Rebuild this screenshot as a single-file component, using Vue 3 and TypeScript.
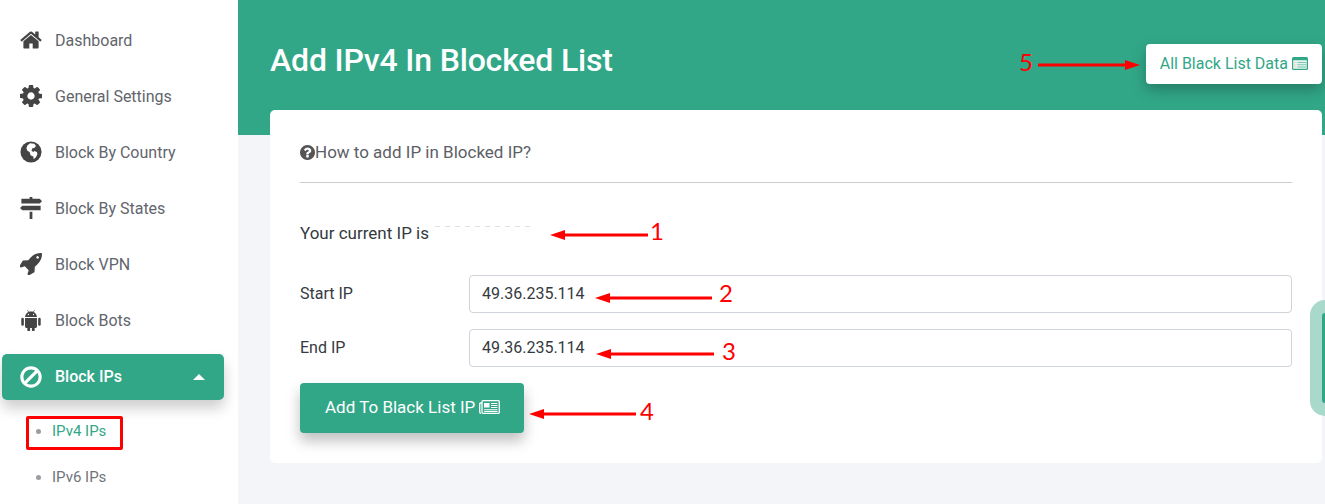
<script setup lang="ts">
interface NavItem { label: string; icon: string }
const nav: NavItem[] = [
  { label: 'Dashboard', icon: 'home' },
  { label: 'General Settings', icon: 'cog' },
  { label: 'Block By Country', icon: 'globe' },
  { label: 'Block By States', icon: 'signs' },
  { label: 'Block VPN', icon: 'rocket' },
  { label: 'Block Bots', icon: 'android' },
]
const home = 'M1472 992v480q0 26-19 45t-45 19h-384v-384h-256v384h-384q-26 0-45-19t-19-45v-480q0-1 .5-3t.5-3l575-474 575 474q1 2 1 6zm223-69l-62 74q-8 9-21 11h-3q-13 0-21-7l-692-577-692 577q-12 8-24 7-13-2-21-11l-62-74q-8-10-7-23.500t11-21.500l719-599q32-26 76-26t76 26l244 204v-195q0-14 9-23t23-9h192q14 0 23 9t9 23v408l219 182q10 8 11 21.500t-7 23.500z'
const cog = 'M1152 896q0-106-75-181t-181-75-181 75-75 181 75 181 181 75 181-75 75-181zm512-109v222q0 12-8 23t-20 13l-185 28q-19 54-39 91 35 50 107 138 10 12 10 25t-9 23q-27 37-99 108t-94 71q-12 0-26-9l-138-108q-44 23-91 38-16 136-29 186-7 28-36 28h-222q-14 0-24.500-8.500t-11.500-21.500l-28-184q-49-16-90-37l-141 107q-10 9-25 9-14 0-25-11-126-114-165-168-7-10-7-23 0-12 8-23 15-21 51-66.500t54-70.500q-27-50-41-99l-183-27q-13-2-21-12.500t-8-23.500v-222q0-12 8-23t19-13l186-28q14-46 39-92-40-57-107-138-10-12-10-24 0-10 9-23 26-36 98.500-107.500t94.500-71.500q13 0 26 10l138 107q44-23 91-38 16-136 29-186 7-28 36-28h222q14 0 24.500 8.500t11.500 21.500l28 184q49 16 90 37l142-107q9-9 24-9 13 0 25 10 129 119 165 170 7 8 7 22 0 12-8 23-15 21-51 66.500t-54 70.500q26 50 41 98l183 28q13 2 21 12.500t8 23.500z'
const rocket = 'M1504 448q0-40-28-68t-68-28-68 28-28 68 28 68 68 28 68-28 28-68zm224-288q0 249-75.500 430.500t-253.500 360.500q-81 80-195 176l-20 379q-2 16-16 26l-384 224q-7 4-16 4-12 0-23-9l-64-64q-13-14-8-32l85-276-281-281-276 85q-3 1-9 1-14 0-23-9l-64-64q-17-19-5-39l224-384q10-14 26-16l379-20q96-114 176-195 188-187 358-258t431-71q14 0 24 9.500t10 22.500z'
const question = 'M1024 1376v-192q0-14-9-23t-23-9h-192q-14 0-23 9t-9 23v192q0 14 9 23t23 9h192q14 0 23-9t9-23zm256-672q0-88-55.500-163t-138.500-116-170-41q-243 0-371 213-15 24 8 42l132 100q7 6 19 6 16 0 25-12 53-68 86-92 34-24 86-24 48 0 85.500 26t37.500 59q0 38-20 61t-68 45q-63 28-115.500 86.500t-52.500 125.500v36q0 14 9 23t23 9h192q14 0 23-9t9-23q0-19 21.500-49.500t54.500-49.500q32-18 49-28.500t46-35 44.500-48 28-60.500 12.500-81zm384 192q0 209-103 385.500t-279.500 279.500-385.500 103-385.500-103-279.500-279.500-103-385.500 103-385.500 279.500-279.500 385.500-103 385.500 103 279.500 279.500 103 385.500z'

interface Arrow { x1: number; tip: number; y: number; n: string; nx: number; ny: number }
const arrows: Arrow[] = [
  { x1: 648, tip: 550, y: 235, n: '1', nx: 657, ny: 240 },
  { x1: 712, tip: 595, y: 298, n: '2', nx: 726, ny: 302 },
  { x1: 714, tip: 596, y: 354, n: '3', nx: 729, ny: 360 },
  { x1: 636, tip: 529, y: 414, n: '4', nx: 647, ny: 420 },
  { x1: 1038, tip: 1140, y: 65, n: '5', nx: 1026, ny: 71 },
]
function headPoints(a: Arrow): string {
  const dir = a.x1 > a.tip ? 1 : -1
  const base = a.tip + dir * 15
  return `${a.tip},${a.y} ${base},${a.y - 5} ${base},${a.y + 5}`
}
</script>

<template>
  <div class="page">
    <aside class="sidebar">
      <ul class="menu">
        <li v-for="item in nav" :key="item.label" class="menu-item">
          <svg v-if="item.icon === 'home'" class="ico" viewBox="64 192 1664 1408"><path :d="home" /></svg>
          <svg v-else-if="item.icon === 'cog'" class="ico" viewBox="128 128 1536 1536"><path :d="cog" /></svg>
          <svg v-else-if="item.icon === 'globe'" class="ico" viewBox="0 0 24 24">
            <circle cx="12" cy="12" r="11.500" />
            <path fill="#fff" d="M8 5l3-2.500 4.500.5 2 2.500-2 2-2 .5-1 2.500 2 1.500 1-1 3 1 .5 2.500-1.500 3-2.500 2.500-.5-3-3-1.500-1-3.500-2.500-1.500-1-2.500z" />
          </svg>
          <svg v-else-if="item.icon === 'signs'" class="ico tall" viewBox="0 0 24 24">
            <path d="M10.500 0h3v2h8l2.500 2.500-2.500 2.500H1.500V2h9zM2.500 9.500H22.500v5h-20L0 12zM10.500 16h3v8h-3z" />
          </svg>
          <svg v-else-if="item.icon === 'rocket'" class="ico" viewBox="128 128 1600 1600"><path :d="rocket" /></svg>
          <svg v-else class="ico" viewBox="0 0 24 24">
            <path d="M5.500 8.800C5.700 5.900 7.500 4.200 9 3.400L7.900 1.400l.5-.3L9.600 3.100C11.100 2.500 12.900 2.500 14.400 3.100L15.600 1.100l.5.3L15 3.400C16.500 4.200 18.300 5.900 18.500 8.800zM5.500 9.800h13v9.400c0 .8-.6 1.400-1.400 1.400H16v2.200a1.500 1.500 0 0 1-3 0v-2.200h-2v2.200a1.500 1.500 0 0 1-3 0v-2.200H6.900c-.8 0-1.400-.6-1.400-1.400zM2.800 9.500A1.400 1.400 0 0 1 4.200 10.900v5.900a1.400 1.400 0 0 1-2.800 0v-5.900A1.400 1.400 0 0 1 2.800 9.500zM21.200 9.500a1.400 1.400 0 0 1 1.400 1.400v5.900a1.400 1.400 0 0 1-2.800 0v-5.900A1.400 1.400 0 0 1 21.200 9.500z" />
            <circle cx="9.200" cy="6" r=".7" fill="#fff" /><circle cx="14.800" cy="6" r=".7" fill="#fff" />
          </svg>
          <span>{{ item.label }}</span>
        </li>
        <li class="menu-item active">
          <svg class="ico" viewBox="0 0 24 24">
            <circle cx="12" cy="12" r="10" fill="none" stroke="#fff" stroke-width="3.400" />
            <path d="M5 19L19 5" stroke="#fff" stroke-width="3.400" />
          </svg>
          <span>Block IPs</span>
          <i class="caret"></i>
        </li>
        <li class="sub-item current"><i class="dot"></i>IPv4 IPs<b class="redbox"></b></li>
        <li class="sub-item"><i class="dot"></i>IPv6 IPs</li>
      </ul>
    </aside>

    <main class="main">
      <header class="banner">
        <h1>Add IPv4 In Blocked List</h1>
        <a class="list-btn">All Black List Data
          <svg class="list-ico" viewBox="0 0 16 13">
            <rect width="16" height="13" rx="1.500" fill="#31a788" />
            <rect x="1.200" y="3.200" width="13.600" height="8.600" fill="#e6f4f0" />
            <path d="M1.500 5.500h3M1.500 7.800h3M1.500 10h3" stroke="#f0d8c4" stroke-width="1.200" />
            <path d="M5.500 5.500h9M5.500 7.800h9M5.500 10h9" stroke="#7cc6b2" stroke-width="1.100" />
          </svg>
        </a>
      </header>

      <section class="card">
        <div class="help">
          <svg class="help-ico" viewBox="128 128 1536 1536"><path :d="question" /></svg>How to add IP in Blocked IP?
        </div>
        <hr class="rule" />
        <p class="current-ip">Your current IP is <span class="blur"></span></p>
        <div class="row">
          <label>Start IP</label>
          <div class="field">49.36.235.114</div>
        </div>
        <div class="row">
          <label>End IP</label>
          <div class="field">49.36.235.114</div>
        </div>
        <button class="add-btn" type="button">Add To Black List IP
          <svg class="news-ico" viewBox="0 0 21 14" fill="none" stroke="#fff">
            <rect x="3" y=".7" width="17.300" height="12.600" rx="1" stroke-width="1.300" />
            <path d="M3 3H1.700C1 3 .7 3.400 .7 4v8c0 .8.6 1.300 1.300 1.300" stroke-width="1.300" />
            <rect x="5" y="3" width="5.500" height="4.500" fill="#fff" stroke="none" />
            <path d="M12 3.500h6.500M12 5.500h6.500M12 7.500h6.500M5 9.700h13.500M5 11.500h13.500" stroke-width="1.100" />
          </svg>
        </button>
      </section>
    </main>

    <div class="side-tab"><i></i></div>

    <svg class="notes" viewBox="0 0 1325 504">
      <g v-for="a in arrows" :key="a.n">
        <line :x1="a.x1" :x2="a.tip + (a.x1 > a.tip ? 8 : -8)" :y1="a.y" :y2="a.y" stroke="#f00" stroke-width="3" />
        <polygon :points="headPoints(a)" fill="#f00" />
        <text :x="a.nx" :y="a.ny" text-anchor="middle" class="note-num">{{ a.n }}</text>
      </g>
    </svg>
  </div>
</template>

<style scoped>
.page {
  position: relative;
  display: flex;
  width: 1325px;
  height: 504px;
  overflow: hidden;
  background: #f4f5f8;
  font-family: Roboto, "Liberation Sans", sans-serif;
}
.sidebar {
  flex: 0 0 238px;
  background: #fff;
}
.menu {
  list-style: none;
  margin: 0;
  padding: 12px 14px 0 2px;
}
.menu-item {
  display: flex;
  align-items: center;
  height: 56px;
  padding-left: 18px;
  font-size: 16px;
  color: #62656c;
}
.ico {
  flex: 0 0 22px;
  width: 22px;
  height: 22px;
  margin-right: 13px;
  fill: #444;
}
.ico.tall {
  height: 24px;
}
.menu-item.active {
  position: relative;
  box-sizing: border-box;
  height: 46px;
  margin-top: 6px;
  padding-bottom: 1px;
  color: #fff;
  font-weight: 500;
  background: #31a788;
  border-radius: 5px;
  box-shadow: 0 8px 14px rgba(0, 0, 0, 0.2);
}
.caret {
  margin-left: auto;
  margin-right: 19px;
  border-left: 6px solid transparent;
  border-right: 6px solid transparent;
  border-bottom: 6px solid #fff;
}
.sub-item {
  position: relative;
  display: flex;
  align-items: center;
  height: 46px;
  padding-left: 34px;
  font-size: 15px;
  color: #70747a;
}
.sub-item.current {
  margin-top: 8px;
  color: #31a788;
}
.dot {
  width: 5px;
  height: 5px;
  margin-right: 11px;
  border-radius: 50%;
  background: #9a9da3;
}
.redbox {
  position: absolute;
  left: 24px;
  top: 8px;
  width: 97px;
  height: 34px;
  box-sizing: border-box;
  border: 3px solid #f00;
  border-radius: 2px;
}
.main {
  flex: 1;
  min-width: 0;
}
.banner {
  display: flex;
  justify-content: space-between;
  align-items: flex-start;
  box-sizing: border-box;
  height: 135px;
  padding: 44px 3px 0 32px;
  background: #31a788;
}
.banner h1 {
  margin: -4px 0 0;
  font-size: 32px;
  line-height: 40px;
  font-weight: 500;
  letter-spacing: -0.18px;
  color: #fff;
}
.list-btn {
  display: flex;
  align-items: center;
  gap: 4px;
  box-sizing: border-box;
  height: 40px;
  padding: 0 14px 2px;
  font-size: 16px;
  color: #31a788;
  background: #fff;
  border-radius: 4px;
  box-shadow: 0 6px 14px rgba(0, 0, 0, 0.25);
}
.list-ico {
  width: 16px;
  height: 13px;
}
.card {
  box-sizing: border-box;
  height: 353px;
  margin: -25px 3px 0 32px;
  padding: 30px 30px 0;
  background: #fff;
  border-radius: 5px;
}
.help {
  display: flex;
  align-items: center;
  height: 24px;
  font-size: 17px;
  color: #5c6066;
}
.help-ico {
  width: 15px;
  height: 15px;
  fill: #555;
}
.rule {
  margin: 18px 0 0;
  border: 0;
  border-top: 1px solid #ccc;
}
.current-ip {
  display: flex;
  gap: 6px;
  margin: 38px 0 0;
  font-size: 17px;
  line-height: 24px;
  color: #343a40;
}
.blur {
  width: 97px;
  height: 1px;
  margin-top: 5px;
  background: repeating-linear-gradient(90deg, #dde0e4 0 5px, #fff 5px 10px);
}
.row {
  display: flex;
  align-items: center;
  margin-bottom: 16px;
  font-size: 16px;
  color: #343a40;
}
.current-ip + .row {
  margin-top: 30px;
}
.row label {
  flex: 0 0 169px;
  padding-bottom: 2px;
}
.field {
  flex: 1;
  box-sizing: border-box;
  height: 38px;
  padding: 0 12px;
  font-size: 16px;
  line-height: 36px;
  color: #343a40;
  border: 1px solid #ced4da;
  border-radius: 4px;
}
.add-btn {
  display: flex;
  align-items: center;
  gap: 4px;
  height: 50px;
  padding: 0 24px 2px 25px;
  border: 0;
  border-radius: 4px;
  font: 400 17px Roboto, "Liberation Sans", sans-serif;
  color: #fff;
  background: #31a788;
  box-shadow: 0 8px 14px rgba(0, 0, 0, 0.25);
}
.news-ico {
  width: 21px;
  height: 14px;
}
.side-tab {
  position: absolute;
  right: 0;
  top: 300px;
  display: flex;
  align-items: center;
  width: 15px;
  height: 116px;
  background: #a9d9ca;
  border-radius: 15px 0 0 15px;
}
.side-tab i {
  width: 3px;
  height: 90px;
  margin-left: 12px;
  background: #31a788;
  border-radius: 3px 0 0 3px;
}
.notes {
  position: absolute;
  inset: 0;
  width: 1325px;
  height: 504px;
  pointer-events: none;
}
.note-num {
  font-family: Lato, sans-serif;
  font-size: 24px;
  font-weight: 400;
  fill: #f00;
}
</style>
